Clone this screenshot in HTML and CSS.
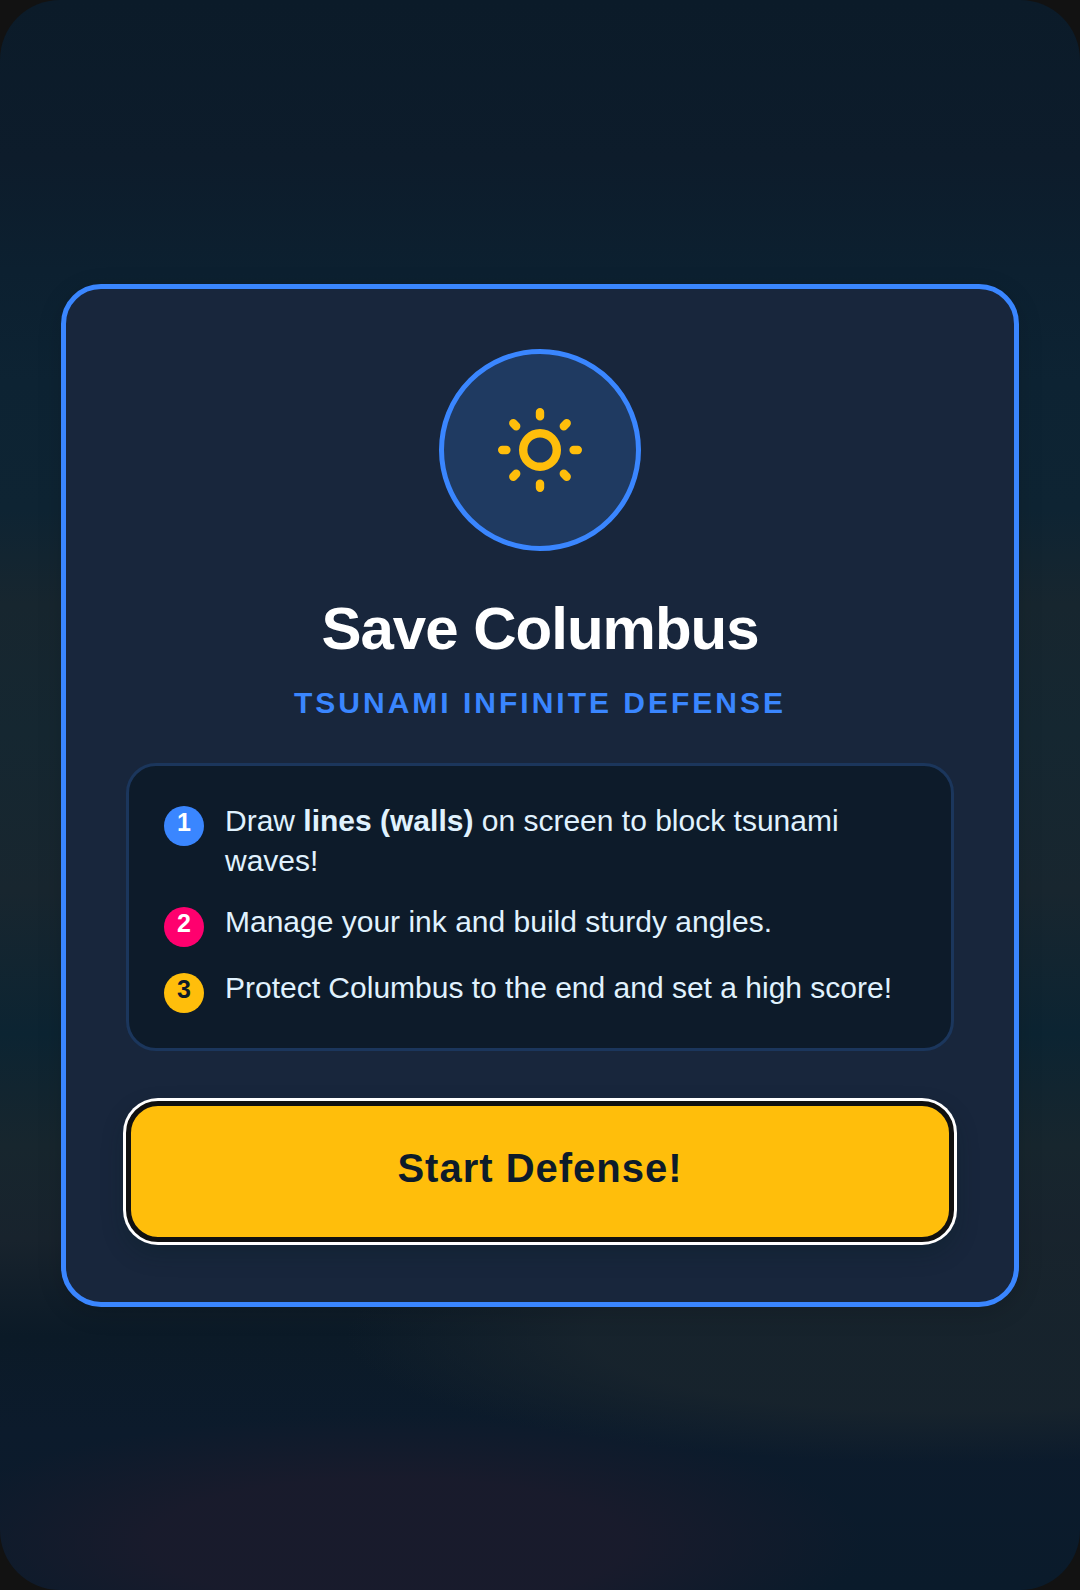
FILE: index.html
```html
<!DOCTYPE html>
<html lang="en">
<head>
<meta charset="utf-8">
<meta name="viewport" content="width=device-width, initial-scale=1">
<title>Save Columbus</title>
<link rel="stylesheet" href="styles.css">
</head>
<body>
<main class="stage">
  <section class="card">
    <div class="emblem">
      <svg class="sun" viewBox="0 0 100 100" aria-hidden="true">
        <circle cx="50" cy="50" r="16.8"/>
        <path d="M50 12.2v4.2M50 83.6v4.2M12.2 50h4.2M83.6 50h4.2M23.3 23.3l2.9 2.9M73.8 73.8l2.9 2.9M23.3 76.7l2.9-2.9M73.8 26.2l2.9-2.9"/>
      </svg>
    </div>
    <h1 class="title">Save Columbus</h1>
    <p class="subtitle">TSUNAMI INFINITE DEFENSE</p>
    <ol class="rules">
      <li class="rule"><span class="badge badge-blue">1</span><span>Draw <strong>lines (walls)</strong> on screen to block tsunami waves!</span></li>
      <li class="rule"><span class="badge badge-pink">2</span><span>Manage your ink and build sturdy angles.</span></li>
      <li class="rule"><span class="badge badge-gold">3</span><span>Protect Columbus to the end and set a high score!</span></li>
    </ol>
    <button class="start" type="button">Start Defense!</button>
  </section>
</main>
</body>
</html>
```
FILE: styles.css
```css
* { box-sizing: border-box; }

body {
  margin: 0;
  background: #121212;
  font-family: "Liberation Sans", Arial, sans-serif;
}

.stage {
  display: flex;
  align-items: center;
  justify-content: center;
  min-height: 100vh;
  padding: 60px;
  border-radius: 60px;
  background:
    radial-gradient(ellipse 44% 8% at 36% 97%, rgba(26, 27, 44, 0.9) 50%, transparent),
    radial-gradient(ellipse 56% 8% at 88% 84%, rgba(24, 36, 45, 0.9) 60%, transparent),
    linear-gradient(#0b1b29 0%, #0d1c2b 10%, #0c2030 17%, #0d2333 24%, #0e2433 32%, #17262f 38%, #152731 46%, #18262f 56%, #0c2432 65%, #17262e 72%, #18232d 78%, #0b1a27 84%, #0c1b2c 90%, #0a1b2b 100%);
}

.card {
  display: flex;
  flex-direction: column;
  align-items: center;
  width: 100%;
  max-width: 958px;
  padding: 60px;
  border: 5px solid #3a86ff;
  border-radius: 40px;
  background: #18263c;
  box-shadow: 0 6px 24px rgba(0, 0, 0, 0.15);
}

.emblem {
  display: grid;
  place-items: center;
  width: 202px;
  height: 202px;
  border: 5px solid #3a86ff;
  border-radius: 50%;
  background: #1f3a61;
}

.sun {
  width: 100px;
  height: 100px;
  fill: none;
  stroke: #ffbe0b;
  stroke-width: 8.4;
  stroke-linecap: round;
}

.title {
  margin: 40px 0 16px;
  color: #fff;
  font-size: 60px;
  line-height: 76px;
  letter-spacing: -1px;
}

.subtitle {
  margin: 0 0 40px;
  color: #3a86ff;
  font-size: 30px;
  font-weight: 700;
  line-height: 40px;
  letter-spacing: 3px;
}

.rules {
  display: flex;
  flex-direction: column;
  gap: 21px;
  width: 100%;
  margin: 0 0 50px;
  padding: 35px;
  border: 3px solid #1b365c;
  border-radius: 30px;
  background: #0d1b2a;
  color: #e0f2fe;
  font-size: 30px;
  line-height: 40px;
  list-style: none;
}

.rule {
  display: flex;
  align-items: flex-start;
  gap: 21px;
}

.badge {
  display: grid;
  flex: none;
  place-items: center;
  width: 40px;
  height: 40px;
  margin-top: 5px;
  padding-bottom: 8px;
  border-radius: 50%;
  font-size: 25px;
  font-weight: 700;
  line-height: 32px;
}

.badge-blue { background: #3a86ff; color: #fff; }
.badge-pink { background: #ff006e; color: #fff; }
.badge-gold { background: #ffbe0b; color: #0d1b2a; }

.start {
  width: 100%;
  padding: 39px 20px 46px;
  border: 5px solid #101010;
  border-radius: 32px;
  background: #ffbe0b;
  box-shadow: 0 0 0 3px #fff, 0 10px 24px rgba(0, 30, 30, 0.3);
  color: #0d1b2a;
  font: 700 40px/46px "Liberation Sans", Arial, sans-serif;
  letter-spacing: 1px;
}
```
